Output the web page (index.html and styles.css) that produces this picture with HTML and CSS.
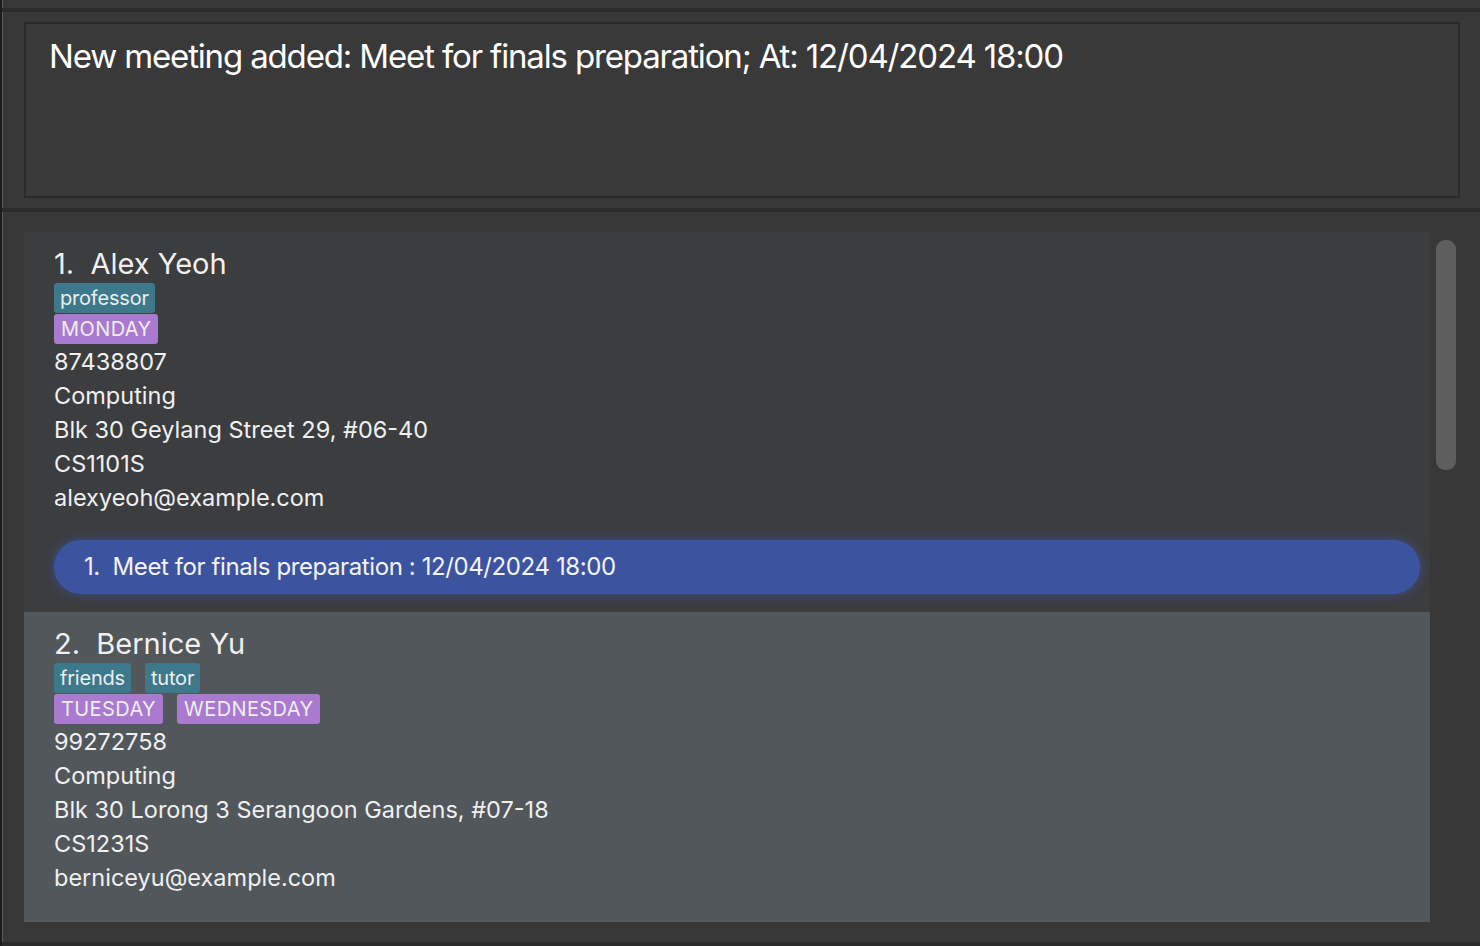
FILE: index.html
```html
<!DOCTYPE html>
<html>
<head>
<meta charset="utf-8">
<link rel="stylesheet" href="styles.css">
</head>
<body>
<div class="app">
  <div class="top-pad"></div>
  <div class="divider"></div>
  <div class="result-section">
    <div class="result-box">New meeting added: Meet for finals preparation; At: 12/04/2024 18:00</div>
  </div>
  <div class="divider"></div>
  <div class="list-section">
    <div class="list">
      <div class="card card-odd">
        <div class="name">1.&nbsp; Alex Yeoh</div>
        <div class="tags"><span class="tag tag-teal">professor</span></div>
        <div class="tags"><span class="tag tag-purple">MONDAY</span></div>
        <div class="line">87438807</div>
        <div class="line">Computing</div>
        <div class="line">Blk 30 Geylang Street 29, #06-40</div>
        <div class="line">CS1101S</div>
        <div class="line">alexyeoh@example.com</div>
        <div class="meetings">
          <div class="meeting">1.&nbsp; Meet for finals preparation : 12/04/2024 18:00</div>
        </div>
      </div>
      <div class="card card-even">
        <div class="name">2.&nbsp; Bernice Yu</div>
        <div class="tags"><span class="tag tag-teal">friends</span><span class="tag tag-teal">tutor</span></div>
        <div class="tags"><span class="tag tag-purple">TUESDAY</span><span class="tag tag-purple">WEDNESDAY</span></div>
        <div class="line">99272758</div>
        <div class="line">Computing</div>
        <div class="line">Blk 30 Lorong 3 Serangoon Gardens, #07-18</div>
        <div class="line">CS1231S</div>
        <div class="line">berniceyu@example.com</div>
      </div>
    </div>
    <div class="scrolltrack"><div class="thumb"></div></div>
  </div>
  <div class="divider"></div>
</div>
</body>
</html>
```
FILE: styles.css
```css
html, body {
  margin: 0;
  padding: 0;
  background: #383838;
  width: 1480px;
  height: 946px;
  overflow: hidden;
  font-family: Inter, "Open Sans", sans-serif;
  color: #f0f0f0;
}
* { box-sizing: border-box; }
.app {
  width: 1480px;
  height: 946px;
  border-left: 2px solid #1c1c1c;
  box-shadow: inset 1px 0 0 #5c5c5c;
  display: flex;
  flex-direction: column;
}
.top-pad { height: 8px; flex: none; }
.divider { height: 4px; background: #2b2b2b; flex: none; }
.result-section {
  padding: 10px 20px 10px 22px;
  flex: none;
}
.result-box {
  height: 176px;
  border: 2px solid #2a2a2a;
  background: #393939;
  padding: 11px 23px 0;
  font-size: 33px;
  line-height: 42px;
  color: #ffffff;
  letter-spacing: -1.15px;
}
.list-section {
  flex: 1;
  display: flex;
  padding: 20px 0 0 22px;
  overflow: hidden;
}
.list {
  width: 1406px;
  flex: none;
}
.card {
  padding: 14px 0 0 30px;
}
.card-odd { background: #3c3d3f; padding-bottom: 18px; }
.card-even { background: #51575a; padding-bottom: 27px; }
.name {
  font-size: 29px;
  line-height: 36px;
  height: 36px;
}
.tags {
  display: flex;
  gap: 14px;
  margin-top: 1px;
  margin-bottom: 1px;
}
.tag {
  height: 30px;
  line-height: 30px;
  font-size: 20px;
  padding: 0 6px;
  border-radius: 3px;
  color: #eeeeee;
}
.tag-teal { background: #3d788b; letter-spacing: -0.2px; }
.tag-purple { background: #a97acf; letter-spacing: 0.4px; padding: 0 7px; }
.line {
  font-size: 23.5px;
  line-height: 34px;
  height: 34px;
}
.meetings {
  padding-top: 25px;
  padding-right: 10px;
}
.meeting {
  height: 54px;
  line-height: 54px;
  border-radius: 27px;
  background: #3c54a0;
  box-shadow: 0 0 10px 2px rgba(62, 84, 160, 0.55);
  padding-left: 30px;
  font-size: 24px;
  letter-spacing: -0.4px;
  color: #f4f4f4;
}
.scrolltrack {
  width: 20px;
  margin-left: 6px;
  padding-top: 8px;
  flex: none;
}
.thumb {
  height: 230px;
  background: #5e5e5e;
  border-radius: 9px;
}
```
